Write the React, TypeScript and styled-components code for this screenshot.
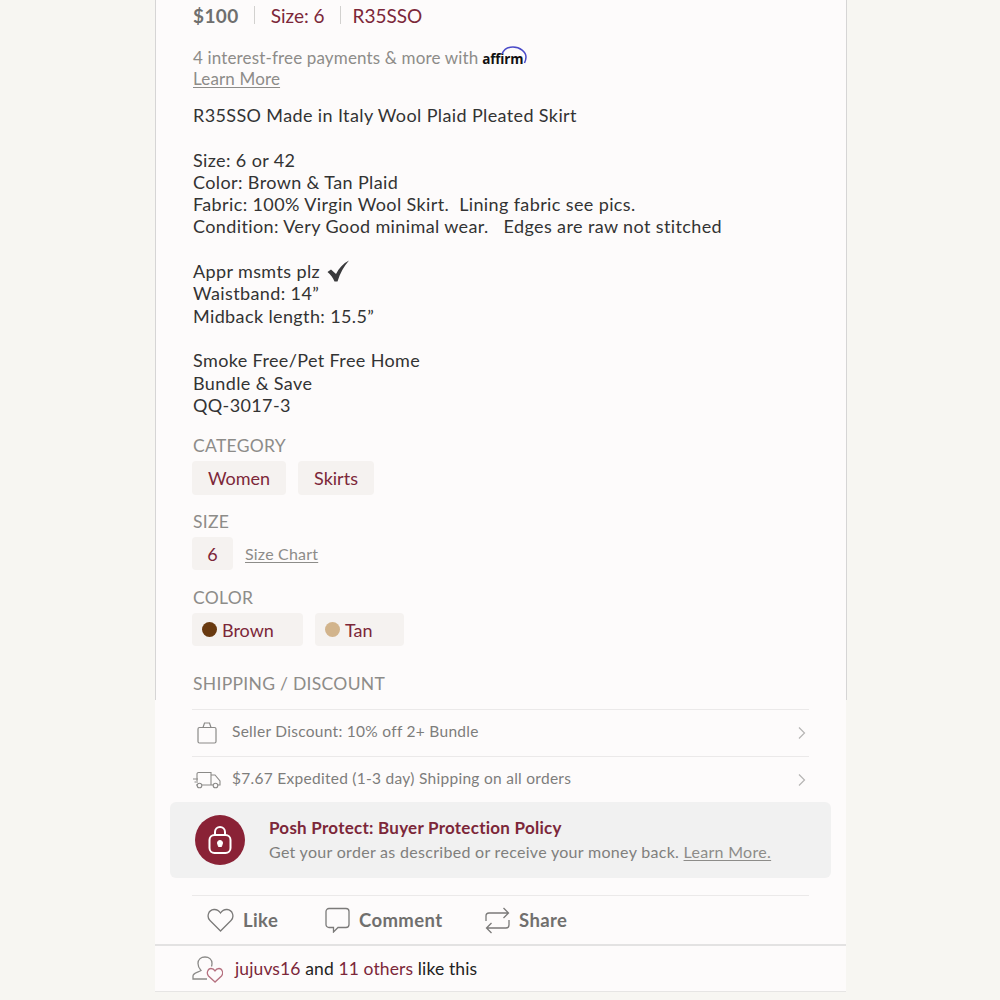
import React from "react";
import styled, { createGlobalStyle } from "styled-components";

const maroon = "#7c2739";
const grey = "#8d8c89";
const rule = "#ebe9e9";

const GlobalStyle = createGlobalStyle`
  html, body {
    margin: 0;
    padding: 0;
    background: #f7f6f2;
  }
  * {
    box-sizing: border-box;
  }
`;

const Page = styled.div`
  width: 1000px;
  height: 1000px;
  overflow: hidden;
  font-family: Lato, "Noto Sans", sans-serif;
  color: #333;
`;

const Upper = styled.section`
  width: 692px;
  height: 700px;
  margin-left: 155px;
  padding-left: 36px;
  background: #fdfbfb;
  border-left: 1px solid #d6d5d5;
  border-right: 1px solid #d6d5d5;
`;

const Lower = styled.section`
  width: 691px;
  height: 292px;
  margin-left: 155px;
  padding-top: 9px;
  background: #fdfbfb;
  border-bottom: 1px solid #e6e5e4;
`;

const PriceRow = styled.div`
  display: flex;
  align-items: center;
  height: 30px;
  padding-left: 1px;
  font-size: 19px;
`;

const Price = styled.span`
  font-weight: 700;
  letter-spacing: 0.4px;
  color: #6f6f6e;
`;

const Bar = styled.span<{ $after: number }>`
  width: 1px;
  height: 18px;
  margin: 0 ${({ $after }) => $after}px 0 15px;
  background: #d2d1cf;
`;

const Maroon = styled.span`
  color: ${maroon};
`;

const Affirm = styled.div`
  margin-top: 17px;
  padding-left: 1px;
  font-size: 17px;
  line-height: 21px;
  letter-spacing: 0.15px;
  color: ${grey};
`;

const AffirmLogo = styled.span`
  position: relative;
  display: inline-block;
  margin-left: 4px;
  font-family: "Open Sans", sans-serif;
  font-size: 13.5px;
  font-weight: 700;
  line-height: 0;
  letter-spacing: -0.2px;
  color: #111;

  svg {
    position: absolute;
    top: -13px;
    left: 19px;
  }
`;

const Underlined = styled.a`
  color: ${grey};
  text-decoration: underline;
  text-underline-offset: 2px;
`;

const Description = styled.div`
  margin-top: 15px;
  padding-left: 1px;
  font-size: 18px;
  line-height: 22.3px;
  letter-spacing: 0.38px;
  white-space: pre-wrap;
  color: #333;

  svg {
    vertical-align: 2px;
    margin: -6px 0 -6px 2px;
  }
`;

const SectionLabel = styled.div<{ $top: number }>`
  margin-top: ${({ $top }) => $top}px;
  padding-left: 1px;
  height: 22px;
  font-size: 17.5px;
  line-height: 22px;
  letter-spacing: 0.3px;
  color: ${grey};
`;

const ChipRow = styled.div`
  display: flex;
  align-items: center;
  gap: 12px;
  margin-top: 4px;
`;

const Chip = styled.span<{ $width: number; $height?: number }>`
  display: flex;
  align-items: center;
  justify-content: center;
  width: ${({ $width }) => $width}px;
  height: ${({ $height }) => $height ?? 34}px;
  border-radius: 4px;
  background: #f5f2f0;
  font-size: 18px;
  color: ${maroon};
`;

const ColorChip = styled(Chip)`
  justify-content: flex-start;
  gap: 5px;
  padding-left: 10px;
`;

const Dot = styled.span<{ $color: string }>`
  width: 15px;
  height: 15px;
  border-radius: 50%;
  background: ${({ $color }) => $color};
`;

const SizeChart = styled(Underlined)`
  font-size: 16px;
  letter-spacing: 0.2px;
`;

const InfoRow = styled.div`
  display: flex;
  align-items: center;
  height: 47px;
  margin: 0 37px;
  padding: 0 2px 0 0;
  border-top: 1px solid ${rule};
  font-size: 15.5px;
  letter-spacing: 0.28px;
  color: #7d7d7b;
`;

const InfoIcon = styled.span`
  display: flex;
  justify-content: center;
  width: 29px;
  margin-right: 11px;
`;

const InfoText = styled.span`
  flex: 1;
  padding-bottom: 4px;
`;

const ProtectBox = styled.div`
  display: flex;
  align-items: center;
  height: 76px;
  margin: -1px 15px 0;
  padding-left: 25px;
  border-radius: 6px;
  background: #f1f1f1;
`;

const ProtectBadge = styled.span`
  display: flex;
  align-items: center;
  justify-content: center;
  width: 50px;
  height: 50px;
  border-radius: 50%;
  background: #8a2236;
`;

const ProtectText = styled.div`
  margin: -2px 0 0 24px;
`;

const ProtectTitle = styled.div`
  font-size: 17px;
  font-weight: 700;
  line-height: 24px;
  letter-spacing: 0.25px;
  color: ${maroon};
`;

const ProtectNote = styled.div`
  margin-top: 1px;
  font-size: 16px;
  line-height: 22px;
  letter-spacing: 0.3px;
  color: #807f7d;
`;

const Actions = styled.div`
  display: flex;
  align-items: center;
  height: 49px;
  margin: 17px 37px 0;
  padding-left: 15px;
  border-top: 1px solid ${rule};
`;

const Action = styled.span<{ $width: number }>`
  display: flex;
  align-items: center;
  gap: 9px;
  width: ${({ $width }) => $width}px;
  font-size: 18.5px;
  font-weight: 700;
  letter-spacing: 0.4px;
  color: #706f6e;
`;

const LikesRow = styled.div`
  display: flex;
  align-items: center;
  gap: 12px;
  height: 48px;
  padding: 0 0 2px 37px;
  border-top: 2px solid #e3e2e2;
  font-size: 17.5px;
  letter-spacing: 0.12px;
  color: #222;

  svg {
    margin-top: 2px;
  }
`;

const Chevron = () => (
  <svg width="10" height="14" viewBox="0 0 10 14" fill="none" stroke="#b5b4b3" strokeWidth="1.2">
    <path d="M2 1.5 7.5 7 2 12.5" />
  </svg>
);

const App = () => (
  <Page>
    <GlobalStyle />
    <Upper>
      <PriceRow>
        <Price>$100</Price>
        <Bar $after={16} />
        <Maroon>Size: 6</Maroon>
        <Bar $after={12} />
        <Maroon>R35SSO</Maroon>
      </PriceRow>
      <Affirm>
        4 interest-free payments &amp; more with
        <AffirmLogo>
          affirm
          <svg width="26" height="18" viewBox="0 0 26 18" fill="none" stroke="#4a4ac8" strokeWidth="1.5">
            <path d="M1 8C3 3 7 1 12 1c7 0 13 5 13 10 0 2-.6 4-1.500 6" />
          </svg>
        </AffirmLogo>
        <br />
        <Underlined>Learn More</Underlined>
      </Affirm>
      <Description>
        {"R35SSO Made in Italy Wool Plaid Pleated Skirt\n\nSize: 6 or 42\nColor: Brown & Tan Plaid\nFabric: 100% Virgin Wool Skirt.  Lining fabric see pics.\nCondition: Very Good minimal wear.   Edges are raw not stitched\n\nAppr msmts plz "}
        <svg width="23" height="22" viewBox="0 0 23 22" fill="#3a3a3c">
          <path d="M.5 12 4 9.500 9 14C12 8 16 3.500 22 .5 17 6 13 13 10.500 21.500H7.500C6 17.500 3.500 14.500.5 12Z" />
        </svg>
        {"\nWaistband: 14”\nMidback length: 15.5”\n\nSmoke Free/Pet Free Home\nBundle & Save\nQQ-3017-3"}
      </Description>
      <SectionLabel $top={19}>CATEGORY</SectionLabel>
      <ChipRow>
        <Chip $width={94}>Women</Chip>
        <Chip $width={76}>Skirts</Chip>
      </ChipRow>
      <SectionLabel $top={16}>SIZE</SectionLabel>
      <ChipRow>
        <Chip $width={41} $height={33}>6</Chip>
        <SizeChart>Size Chart</SizeChart>
      </ChipRow>
      <SectionLabel $top={17}>COLOR</SectionLabel>
      <ChipRow>
        <ColorChip $width={111} $height={33}>
          <Dot $color="#693a10" />
          Brown
        </ColorChip>
        <ColorChip $width={89} $height={33}>
          <Dot $color="#d2b48c" />
          Tan
        </ColorChip>
      </ChipRow>
      <SectionLabel $top={27}>SHIPPING / DISCOUNT</SectionLabel>
    </Upper>
    <Lower>
      <InfoRow>
        <InfoIcon>
          <svg width="20" height="22" viewBox="0 0 20 22" fill="none" stroke="#8b8a88" strokeWidth="1.2">
            <rect x="1" y="5.500" width="18" height="15.500" rx="1.500" />
            <path d="M6 5.500 7.500 1h5L14 5.500" />
          </svg>
        </InfoIcon>
        <InfoText>Seller Discount: 10% off 2+ Bundle</InfoText>
        <Chevron />
      </InfoRow>
      <InfoRow>
        <InfoIcon>
          <svg width="28" height="18" viewBox="0 0 28 18" fill="none" stroke="#8b8a88" strokeWidth="1.100">
            <path d="M4 10V3a1.500 1.500 0 0 1 1.500-1.500H18V14H9M4 14H3M18 4h4l5 6v4h-2M18 14h2" />
            <path d="M0 8h5M1.500 11H5" />
            <circle cx="6.500" cy="14.500" r="2.300" />
            <circle cx="22.500" cy="14.500" r="2.300" />
          </svg>
        </InfoIcon>
        <InfoText>$7.67 Expedited (1-3 day) Shipping on all orders</InfoText>
        <Chevron />
      </InfoRow>
      <ProtectBox>
        <ProtectBadge>
          <svg width="24" height="30" viewBox="0 0 24 30" fill="none" stroke="#fff" strokeWidth="2">
            <rect x="1.500" y="10" width="21" height="18" rx="5" />
            <path d="M7 10V7a5 5 0 0 1 10 0v3" />
            <path d="M9.500 18a2.500 2.500 0 1 1 5 0l-1 3.500h-3Z" fill="#fff" strokeWidth="1" />
          </svg>
        </ProtectBadge>
        <ProtectText>
          <ProtectTitle>Posh Protect: Buyer Protection Policy</ProtectTitle>
          <ProtectNote>
            Get your order as described or receive your money back. <Underlined>Learn More.</Underlined>
          </ProtectNote>
        </ProtectText>
      </ProtectBox>
      <Actions>
        <Action $width={118}>
          <svg width="27" height="24" viewBox="0 0 27 24" fill="none" stroke="#7b7a79" strokeWidth="1.300">
            <path d="M13.500 23 3 12.500C-.5 9 1 2 7 1.500c3-.2 5 1.300 6.500 3.500C15 2.800 17 1.300 20 1.500c6 .5 7.500 7.500 4 11L13.500 23Z" />
          </svg>
          Like
        </Action>
        <Action $width={160}>
          <svg width="25" height="26" viewBox="0 0 25 26" fill="none" stroke="#7b7a79" strokeWidth="1.300">
            <path d="M4 1.500h17a3 3 0 0 1 3 3v13a3 3 0 0 1-3 3H13L8.500 25v-4.500H4a3 3 0 0 1-3-3v-13a3 3 0 0 1 3-3Z" />
          </svg>
          Comment
        </Action>
        <Action $width={100}>
          <svg width="25" height="27" viewBox="0 0 25 27" fill="none" stroke="#7b7a79" strokeWidth="1.300">
            <path d="M1 14V9a3 3 0 0 1 3-3h19M18.500 1 23.500 6l-5 5M24 13v5a3 3 0 0 1-3 3H2M6.500 16l-5 5 5 5" />
          </svg>
          Share
        </Action>
      </Actions>
      <LikesRow>
        <svg width="31" height="27" viewBox="0 0 31 27" fill="none" strokeWidth="1.300">
          <path
            d="M15 23H1v-3c0-3 5-3.500 8-5.500-2-2-3-4.500-3-7C6 3.500 9 1 13 1s7 2.500 7 6.500c0 1-.2 2-.5 3"
            stroke="#8b8a88"
          />
          <path
            d="M23 26l-6.500-6C14 17 16 12.500 19 12.500c2 0 3.200 1 4 2.300.8-1.300 2-2.300 4-2.300 3 0 5 4.500 2.500 7.500L23 26Z"
            stroke="#b5707f"
          />
        </svg>
        <span>
          <Maroon>jujuvs16</Maroon> and <Maroon>11 others</Maroon> like this
        </span>
      </LikesRow>
    </Lower>
  </Page>
);

export default App;
